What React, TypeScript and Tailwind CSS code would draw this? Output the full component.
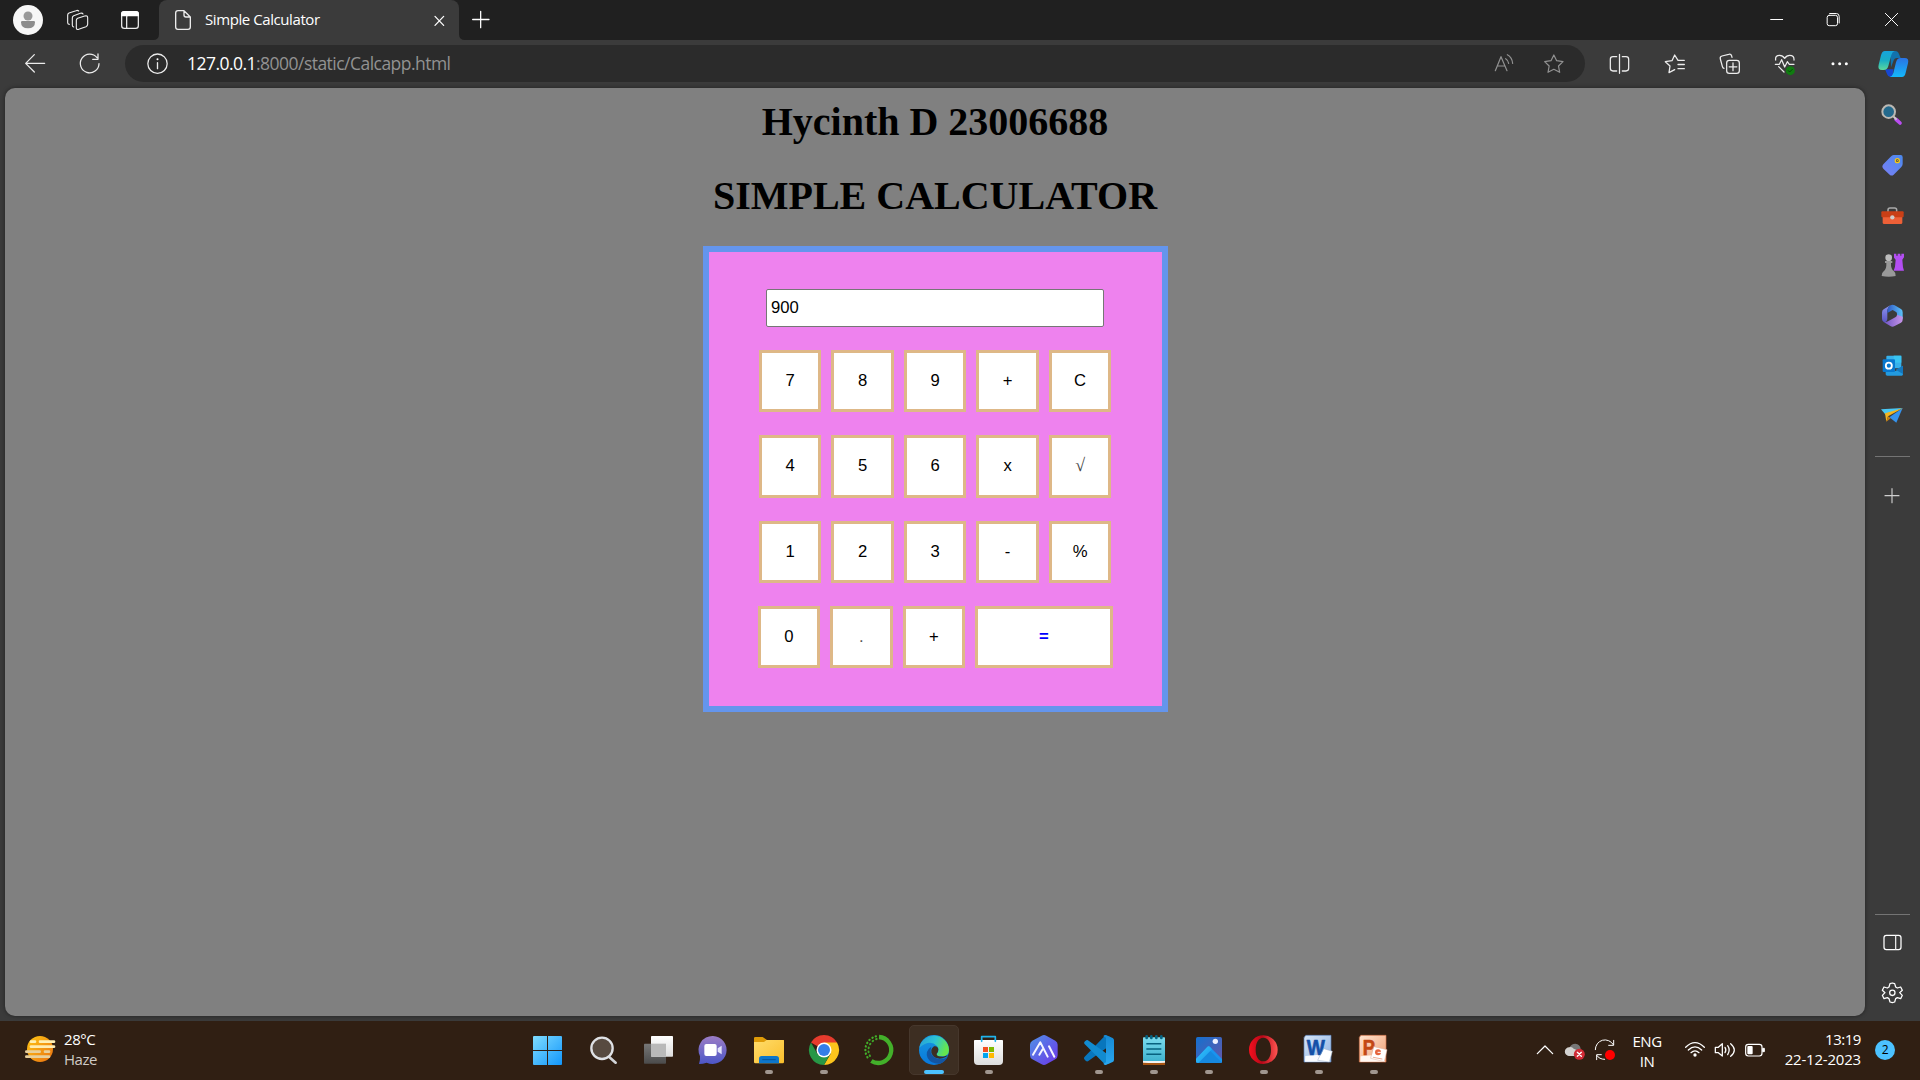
import React from "react";

type Box = [number, number, number, number];

/* Icons are drawn on a grid of three units to the pixel. */
function Art({ box, children, className = "" }: { box: Box; children: React.ReactNode; className?: string }) {
  return (
    <svg
      className={"block shrink-0 " + className}
      width={box[2] / 3}
      height={box[3] / 3}
      viewBox={box.join(" ")}
      fill="none"
      strokeLinecap="round"
      strokeLinejoin="round"
    >
      {children}
    </svg>
  );
}

const line = { stroke: "#ececec", strokeWidth: 3.8 };

function TabStrip() {
  return (
    <div className="flex h-10 w-full shrink-0 bg-[#202020]">
      <Art box={[0, 0, 168, 120]}>
        <circle cx="84" cy="60" r="45" fill="#f7f7f7" />
        <circle cx="84" cy="48" r="13.5" fill="#999" />
        <path d="M67 63 H101 Q105 63 105 67 Q105 85 84 85 Q63 85 63 67 Q63 63 67 63Z" fill="#8d8d8d" />
      </Art>
      <Art box={[168, 0, 150, 120]}>
        <g {...line} strokeWidth="3.4">
          <path d="M233 55 L254 48 Q263 46 263 53 V73 Q263 78 258 80 L236 88 Q229 90 229 83 V61 Q229 57 233 55Z" />
          <path d="M249 42 Q247 38 241 40 L221 47 Q217 49 217 54 V76 Q217 80 221 81" />
          <path d="M236 33 Q233 30 228 32 L207 39 Q203 41 203 45 V68 Q203 72 208 73" />
        </g>
      </Art>
      <Art box={[318, 0, 159, 120]}>
        <rect x="365" y="35" width="50" height="50" rx="8" {...line} />
        <path d="M363 47 V43 Q363 33 373 33 H407 Q417 33 417 43 V49 H363Z" fill="#fff" />
        <path d="M380 49 V84" {...line} />
      </Art>
      <div className="relative flex w-[300px] rounded-t-lg bg-[#3b3b3b]">
        <svg className="absolute bottom-0 -left-1.5" width="6" height="6" viewBox="0 0 6 6">
          <path d="M6 0 V6 H0 Q6 6 6 0Z" fill="#3b3b3b" />
        </svg>
        <svg className="absolute -right-1.5 bottom-0" width="6" height="6" viewBox="0 0 6 6">
          <path d="M0 0 V6 H6 Q0 6 0 0Z" fill="#3b3b3b" />
        </svg>
        <Art box={[477, 0, 138, 120]}>
          <path d="M534 32 H552 L571 51 V81 Q571 88 564 88 H534 Q527 88 527 81 V39 Q527 32 534 32Z M552 32 V45 Q552 51 558 51 H571" {...line} strokeWidth="4" />
        </Art>
        <span className="h-10 w-[216px] whitespace-nowrap font-['Open_Sans',sans-serif] text-[15px] leading-[39px] tracking-[-0.42px] text-white">
          Simple Calculator
        </span>
        <Art box={[1263, 0, 114, 120]}>
          <path d="M1305 49 L1331 76 M1331 49 L1305 76" {...line} stroke="#fff" />
        </Art>
      </div>
      <Art box={[1377, 0, 150, 120]}>
        <path d="M1442 34 V83 M1418 58.5 H1467" {...line} stroke="#fff" />
      </Art>
      <div className="flex-1" />
      <Art box={[870, 0, 160, 120]}>
        <path d="M932 58.5 H968" stroke="#fff" strokeWidth="3" />
      </Art>
      <Art box={[1030, 0, 175, 120]}>
        <rect x="1102.500" y="46" width="31" height="31" rx="6" stroke="#fff" strokeWidth="3" />
        <path d="M1110 40.500 H1130 Q1138.500 40.500 1138.500 49 V69" stroke="#fff" strokeWidth="3" />
      </Art>
      <Art box={[1205, 0, 175, 120]}>
        <path d="M1275 40 L1312 77 M1312 40 L1275 77" stroke="#fff" strokeWidth="3" />
      </Art>
    </div>
  );
}

function Toolbar() {
  return (
    <div className="flex h-12 w-full shrink-0 bg-[#3b3b3b]">
      <Art box={[0, 120, 190, 144]}>
        <path d="M77 190 H134 M103 164 L77 190 L103 216" {...line} />
      </Art>
      <Art box={[190, 120, 185, 144]}>
        <path d="M292 173 A28 28 0 1 0 298 191 M295 162 V178 H279" {...line} />
      </Art>
      <div className="mt-[5px] flex h-[37px] w-[1460px] items-center rounded-full bg-[#2b2b2b]">
        <Art box={[375, 135, 186, 111]}>
          <circle cx="472.500" cy="191" r="29" {...line} />
          <path d="M472.500 188 V206" {...line} strokeWidth="4" />
          <circle cx="472.500" cy="178" r="3" fill="#fff" />
        </Art>
        <span className="flex-1 whitespace-nowrap font-['Open_Sans',sans-serif] text-[17.5px] leading-[37px] tracking-[-0.53px] text-[#929292]">
          <span className="text-white">127.0.0.1</span>:8000/static/Calcapp.html
        </span>
        <Art box={[70, 135, 140, 111]}>
          <g stroke="#919191" strokeWidth="3.6">
            <path d="M107 212 L124 170 L142 212 M113 198 H136" />
            <path d="M138 176 Q146 181 147 190 M143 164 Q157 171 159 190" />
          </g>
        </Art>
        <Art box={[210, 135, 165, 111]}>
          <path d="M281.500 165 L290 182 L309 185 L295.500 198 L299 217 L281.500 208 L264 217 L267.500 198 L254 185 L273 182Z" stroke="#929292" strokeWidth="3.6" />
        </Art>
      </div>
      <Art box={[375, 120, 190, 144]}>
        <path d="M470 170 H459 Q451 170 451 178 V205 Q451 213 459 213 H470 M487 170 H498 Q506 170 506 178 V205 Q506 213 498 213 H487 M478.500 163 V220" {...line} />
      </Art>
      <Art box={[565, 120, 165, 144]}>
        <path d="M674 181 H655 L645 165 L637 182 L617 185 L631 198 L628 218 L645 209 M655 193.500 H674 M655 206 H674" {...line} />
      </Art>
      <Art box={[730, 120, 165, 144]}>
        <rect x="801" y="181" width="38" height="39" rx="8" {...line} />
        <path d="M820 189 V212 M808.500 200.500 H831.500 M793 205 Q789 204 788 199 L782 177 Q780 170 787 168 L807 163 Q814 161 816 168 L817 172" {...line} />
      </Art>
      <Art box={[895, 120, 165, 144]}>
        <path d="M948 180 Q946 166 960 166 Q969 166 975 175 Q981 166 990 166 Q1004 166 1003 180 M947 193 H959 L966 179 L975 201 L983 185 L989 193 H1003 M957 200 L973 216" {...line} />
        <circle cx="992" cy="212" r="13.500" fill="#107c10" />
        <path d="M986 212 L990 216 L998 208" stroke="#064706" strokeWidth="3" />
      </Art>
      <Art box={[1060, 120, 160, 144]}>
        <g fill="#fff">
          <circle cx="1120" cy="191.500" r="4.500" />
          <circle cx="1140" cy="191.500" r="4.500" />
          <circle cx="1160" cy="191.500" r="4.500" />
        </g>
      </Art>
      <Art box={[1220, 120, 160, 144]}>
        <defs>
          <linearGradient id="cpl" x1="0" y1="0" x2="0" y2="1">
            <stop offset="0" stopColor="#16a4dd" />
            <stop offset=".5" stopColor="#19adc4" />
            <stop offset="1" stopColor="#5bd89c" />
          </linearGradient>
          <linearGradient id="cpr" x1="0" y1="0" x2="0" y2="1">
            <stop offset="0" stopColor="#2a73e5" />
            <stop offset="1" stopColor="#14b8fa" />
          </linearGradient>
        </defs>
        <path d="M1290 153 H1305 Q1313 153 1316 162 L1321 174 H1310 Q1302 174 1299 184 L1292 202Z" fill="#1272ad" />
        <path d="M1274 208 H1300 L1296 231 H1290 Q1283 231 1280 222Z" fill="#1747d1" />
        <path d="M1274 153 H1303 Q1296 155 1293 165 L1284 198 Q1281 210 1270 210 H1265 Q1251 210 1255 194 L1262 166 Q1265 153 1274 153Z" fill="url(#cpl)" />
        <path d="M1325 231 H1288 Q1296 229 1299 219 L1307 187 Q1310 174 1321 174 H1333 Q1347 174 1343 190 L1336 218 Q1333 231 1325 231Z" fill="url(#cpr)" />
      </Art>
    </div>
  );
}

const rows: string[][] = [
  ["7", "8", "9", "+", "C"],
  ["4", "5", "6", "x", "√"],
  ["1", "2", "3", "-", "%"],
  ["0", ".", "+", "="],
];

function Page() {
  return (
    <div className="flex h-[927.5px] w-[1860px] flex-col items-center rounded-[10px] bg-[#808080] pt-[11px] shadow-[0_0_4px_rgba(0,0,0,0.45)]">
      <h1 className="font-['Liberation_Serif',serif] text-[40px] leading-[46px] font-bold text-black">Hycinth D 23006688</h1>
      <h1 className="mt-7 font-['Liberation_Serif',serif] text-[40px] leading-[46px] font-bold text-black">SIMPLE CALCULATOR</h1>
      <div className="mt-[27px] ml-px flex h-[466px] w-[465px] flex-col items-center border-[6px] border-[#6495ed] bg-[#ee82ee] pt-[37px] font-['Liberation_Sans',sans-serif] text-[16.67px] text-black">
        <div className="-ml-px flex h-[38px] w-[338px] shrink-0 items-center rounded-[2px] border border-[#767676] bg-white px-1 leading-5">
          <span className="-mt-px">900</span>
        </div>
        <div className="mt-[22.9px] mr-[0.8px] flex flex-col items-center gap-[22.87px]">
          {rows.map((row, r) => (
            <div key={r} className="flex gap-2.5">
              {row.map((k) => (
                <button
                  key={k}
                  className={
                    "flex h-[62.5px] items-center justify-center border-3 border-[#deb887] bg-white pb-[1.5px] " +
                    (k === "=" ? "w-[137.5px] font-bold text-[#0000ff]" : "w-[62.5px]") +
                    (k === "√" ? " font-['Liberation_Serif',serif] text-[18px] text-[#444444]" : "") +
                    (k === "." ? " text-[#555555]" : "")
                  }
                >
                  {k}
                </button>
              ))}
            </div>
          ))}
        </div>
      </div>
    </div>
  );
}

function Sidebar() {
  return (
    <div className="flex w-[55px] flex-col">
      <Art box={[15, -6, 165, 156]}>
        <path d="M108 88 L120 99" stroke="#b94df0" strokeWidth="11" />
        <path d="M101 80 L108 87" stroke="#c9c9c9" strokeWidth="6" />
        <circle cx="86" cy="65" r="19" fill="#23698c" stroke="#bbb8b3" strokeWidth="6" />
      </Art>
      <Art box={[15, 150, 165, 150]}>
        <defs>
          <linearGradient id="tag" x1="1" y1="0" x2="0" y2="1">
            <stop offset="0" stopColor="#4a89ed" />
            <stop offset="1" stopColor="#7a80f5" />
          </linearGradient>
        </defs>
        <path d="M101 195 H122 Q128 195 128 202 V222 Q128 227 124 231 L101 254 Q95 259 89 254 L70 236 Q64 230 70 223 L92 200 Q96 195 101 195Z" fill="url(#tag)" />
        <circle cx="112" cy="212" r="6" fill="#3d4149" stroke="#f5c718" strokeWidth="4" />
        <circle cx="112" cy="212" r="2" fill="#f5c718" />
      </Art>
      <Art box={[15, 300, 165, 150]}>
        <path d="M84 366 V360 Q84 354 90 354 H104 Q110 354 110 360 V366" stroke="#aaa" strokeWidth="4.500" />
        <path d="M68 380 H127 V398 Q127 402 122 402 H73 Q68 402 68 398Z" fill="#ed6037" />
        <rect x="64" y="364" width="67" height="18" rx="3" fill="#c93f16" />
        <circle cx="97" cy="382" r="6.500" fill="#cfccca" />
      </Art>
      <Art box={[15, 450, 165, 150]}>
        <path d="M102 491 H109 V497 H113 V491 H121 V497 H124 V491 H132 V502 L127 509 L129 532 L132 542 H101 L105 530 L107 509 L102 503Z" fill="#b34ef2" />
        <circle cx="86" cy="503" r="10" fill="#bcbcbc" />
        <path d="M75 513 H97 V519 H93 Q92 537 102 544 Q108 549 107 558 Q86 562 65 558 Q64 549 71 544 Q80 537 79 519 H75Z" fill="#999" />
      </Art>
      <Art box={[15, 600, 165, 150]}>
        <defs>
          <linearGradient id="ma" x1="0" y1="0" x2="0" y2="1">
            <stop offset="0" stopColor="#8f97f0" />
            <stop offset="1" stopColor="#5a54c4" />
          </linearGradient>
          <linearGradient id="mb" x1="0" y1="0" x2="1" y2="0">
            <stop offset="0" stopColor="#2f58c4" />
            <stop offset="1" stopColor="#5cc3fa" />
          </linearGradient>
          <linearGradient id="mc" x1="0" y1="0" x2="1" y2="0">
            <stop offset="0" stopColor="#6e55c4" />
            <stop offset="1" stopColor="#c795ea" />
          </linearGradient>
        </defs>
        <path d="M93 645 Q82 652 82 664 V686 Q82 695 72 697 Q66 693 66 687 V668 Q66 661 71 658 L91 646Z" fill="url(#ma)" />
        <path d="M90 647 Q97 642 104 646 L123 657 Q128 660 128 667 V687 L111 677 V671 Q111 667 107 665 L98 660 L82 669 V664 Q82 652 90 647Z" fill="url(#mb)" />
        <path d="M128 680 V689 Q128 695 123 698 L104 708 Q97 712 91 708 L72 697 Q79 697 84 694 L106 682 Q111 679 111 674Z" fill="url(#mc)" />
      </Art>
      <Art box={[15, 750, 165, 150]}>
        <rect x="79" y="797" width="45" height="38" rx="3" fill="#37b1eb" />
        <path d="M101 797 H124 V818 H101Z" fill="#38c4f2" />
        <path d="M79 818 H105 V842 H79Z" fill="#1363a4" />
        <path d="M77 831 L107 843 L129 827 V853 Q129 857 125 857 H82 Q77 857 77 853Z" fill="#239be0" />
        <path d="M129 827 V852 L107 839Z" fill="#1477bd" />
        <rect x="68" y="808" width="37" height="38" rx="3" fill="#0878cf" />
        <circle cx="86.500" cy="827" r="9" stroke="#fff" strokeWidth="5.500" />
      </Art>
      <Art box={[15, 900, 165, 150]}>
        <path d="M63 958 L128 954 L78 976Z" fill="#49c8f4" />
        <path d="M128 954 L109 998 L88 982Z" fill="#3593ee" />
        <path d="M128 955 L84 979 L79 995 L75 970Z" fill="#f4b51f" />
        <path d="M84 979 L92 985 L79 995Z" fill="#c87e11" />
      </Art>
      <div className="mx-2.5 mt-4 h-px w-[35px] bg-[#747474]" />
      <Art box={[15, 1101, 165, 230]}>
        <path d="M96 1196 V1238 M75 1217 H117" {...line} stroke="#cfcfcf" strokeWidth="3.400" />
      </Art>
      <div className="flex-1" />
      <div className="mx-2.5 h-px w-[35px] bg-[#747474]" />
      <Art box={[75, 45, 165, 155]}>
        <rect x="132" y="106" width="51" height="43" rx="7" {...line} stroke="#fff" />
        <path d="M167 107 V148" {...line} />
      </Art>
      <Art box={[75, 200, 165, 163]}>
        <path d="M150 250 L157 248 L164 250 L167 260 L172 263 L182 260 L187 270 L179 277 L187 285 L182 295 L172 292 L167 295 L164 305 L157 307 L150 305 L147 295 L142 292 L132 295 L127 285 L135 277 L127 270 L132 260 L142 263 L147 260Z" {...line} stroke="#fff" />
        <circle cx="157" cy="277.500" r="8" {...line} stroke="#fff" />
      </Art>
    </div>
  );
}

function Cell({ n, dot = true, active = false, children }: { n: number; dot?: boolean; active?: boolean; children: React.ReactNode }) {
  return (
    <div className="relative h-[59px] w-[55px] shrink-0">
      {active && <div className="absolute top-1 left-1 h-[50px] w-[50px] rounded-[5px] border border-[#46372c] bg-[#3d2e22]" />}
      <Art box={[30 + 165 * n, 33, 165, 177]} className="relative">
        {children}
      </Art>
      {active ? (
        <div className="absolute top-[49px] left-[19px] h-1 w-5 rounded-full bg-[#4cc2ff]" />
      ) : (
        dot && <div className="absolute top-[49px] left-[25px] h-1 w-2 rounded-full bg-[#a0968f]" />
      )}
    </div>
  );
}

function Grad({ id, a, b, diag = false }: { id: string; a: string; b: string; diag?: boolean }) {
  return (
    <linearGradient id={id} x1="0" y1="0" x2={diag ? "1" : "0"} y2="1">
      <stop offset="0" stopColor={a} />
      <stop offset="1" stopColor={b} />
    </linearGradient>
  );
}

function Apps() {
  return (
    <div className="flex w-[880px]">
      <Cell n={0} dot={false}>
        <defs>
          <linearGradient id="win" gradientUnits="userSpaceOnUse" x1="69" y1="78" x2="156" y2="165">
            <stop offset="0" stopColor="#7fdcff" />
            <stop offset="1" stopColor="#1296fb" />
          </linearGradient>
        </defs>
        <path d="M71 78 H111 V120 H69 V80Z M114 78 H154 L156 80 V120 H114Z M69 123 H111 V165 H71 L69 163Z M114 123 H156 V163 L154 165 H114Z" fill="url(#win)" />
      </Cell>
      <Cell n={1} dot={false}>
        <path d="M300 143 L317 158" stroke="#d2d4d8" strokeWidth="8" />
        <circle cx="276" cy="115" r="32" fill="#574a40" stroke="#dfe1e5" strokeWidth="7" />
      </Cell>
      <Cell n={2} dot={false}>
        <defs>
          <Grad id="tv1" a="#ffffff" b="#dddddd" />
          <Grad id="tv2" a="#777777" b="#4b4b4b" />
        </defs>
        <rect x="402" y="101" width="66" height="60" rx="2" fill="url(#tv2)" />
        <rect x="423" y="78" width="66" height="62" rx="2" fill="url(#tv1)" />
        <rect x="423" y="101" width="45" height="38" fill="#b9b9b9" />
      </Cell>
      <Cell n={3} dot={false}>
        <defs>
          <Grad id="chat" a="#9c7dc5" b="#4c56c7" />
        </defs>
        <path d="M609 78 A42 42 0 1 1 590 158 Q579 162 567 162 Q571 152 570 139 A42 42 0 0 1 609 78Z" fill="url(#chat)" />
        <rect x="583" y="102" width="37" height="36" rx="6" fill="#fff" />
        <path d="M623 115 L635 107 V133 L623 125Z" fill="#e3e4fa" />
      </Cell>
      <Cell n={4}>
        <defs>
          <Grad id="fold" a="#ffdc6b" b="#fabe2b" diag />
        </defs>
        <path d="M732 84 Q732 81 736 81 H758 L771 90 H822 V110 H732Z" fill="#df9b08" />
        <path d="M732 96 H762 L770 90 H819 Q822 90 822 94 V156 Q822 160 818 160 H736 Q732 160 732 156Z" fill="url(#fold)" />
        <path d="M747 160 V146 Q747 138 755 138 H799 Q807 138 807 146 V160Z" fill="#0d76cb" />
        <path d="M758 149 H796" stroke="#07539b" strokeWidth="3" />
      </Cell>
      <Cell n={5}>
        <path d="M942 120 L903 97.500 A45 45 0 0 1 981 97.500Z" fill="#e63b2d" />
        <path d="M942 97.500 H981 A45 45 0 0 1 942 165 L962 131Z" fill="#fcc41c" />
        <path d="M903 97.500 L922 131 L942 142.500 L961 131 L942 165 A45 45 0 0 1 903 97.500Z" fill="#279746" />
        <circle cx="942" cy="120" r="22.500" fill="#fff" />
        <circle cx="942" cy="120" r="18" fill="#347ee8" />
      </Cell>
      <Cell n={6} dot={false}>
        <path d="M1107 81 A39 39 0 1 1 1084 153" stroke="#43b02a" strokeWidth="13" strokeLinecap="butt" />
        <path d="M1098 79 A42 42 0 0 0 1077 148" stroke="#43b02a" strokeWidth="6.500" strokeDasharray="1 10" />
        <path d="M1100 87 A35 35 0 0 0 1082 141" stroke="#3fa528" strokeWidth="6" strokeDasharray="2 10" />
      </Cell>
      <Cell n={7} active>
        <defs>
          <linearGradient id="e1" x1="0" y1="0" x2="1" y2=".3">
            <stop offset="0" stopColor="#279bd7" />
            <stop offset=".55" stopColor="#2cc4d5" />
            <stop offset="1" stopColor="#65e64f" />
          </linearGradient>
          <Grad id="e2" a="#1797df" b="#0878dc" />
        </defs>
        <circle cx="1272" cy="120" r="45" fill="url(#e2)" />
        <path d="M1228 113 A45 45 0 0 1 1317 120 Q1317 139 1295 139 Q1276 139 1280 132 Q1291 120 1281 108 Q1259 87 1228 113Z" fill="url(#e1)" />
        <path d="M1264 110 Q1244 123 1253 144 Q1264 163 1291 161 Q1306 155 1313 141 Q1292 154 1273 142 Q1257 130 1264 110Z" fill="#1355a2" />
        <path d="M1272 109 Q1283 107 1285 118 Q1285 126 1280 131 Q1278 140 1299 140 L1314 136 Q1309 142 1298 145 Q1278 149 1268 136 Q1257 120 1272 109Z" fill="#3d2e22" />
      </Cell>
      <Cell n={0}>
        <defs>
          <Grad id="bag" a="#ffffff" b="#dddddd" />
        </defs>
        <path d="M95 94 V80 H136 V94" stroke="#20b4ec" strokeWidth="5" />
        <path d="M74 90 H157 Q159 90 159 92 V153 Q159 165 147 165 H84 Q72 165 72 153 V92 Q72 90 74 90Z" fill="url(#bag)" />
        <path d="M95 90 V94 M136 90 V94" stroke="#20b4ec" strokeWidth="5" />
        <path d="M99 111 H114 V126 H99Z" fill="#f25022" />
        <path d="M117 111 H132 V126 H117Z" fill="#7fba00" />
        <path d="M99 129 H114 V144 H99Z" fill="#00a4ef" />
        <path d="M117 129 H132 V144 H117Z" fill="#ffb900" />
      </Cell>
      <Cell n={1} dot={false}>
        <defs>
          <Grad id="hex" a="#4f92e6" b="#6d35e8" diag />
        </defs>
        <path d="M275 77 Q282 73 289 77 L316 92 Q323 96 323 104 V136 Q323 144 316 148 L289 163 Q282 167 275 163 L247 148 Q240 144 240 136 V104 Q240 96 247 92Z" fill="url(#hex)" />
        <path d="M249 134 L271 97 L293 140 M268 134 L277 119 M297 109 L313 140" stroke="#f5f5ff" strokeWidth="6" />
      </Cell>
      <Cell n={2}>
        <defs>
          <Grad id="vs" a="#1689d4" b="#2aa7ef" />
        </defs>
        <path d="M467 75 L482 82 V105 L415 153 Q411 156 407 152 L403 148 Q400 144 404 140Z" fill="#0876bd" />
        <path d="M403 101 Q401 97 405 94 L409 91 Q412 89 416 92 L480 138 V159 L466 164Z" fill="#128bd0" />
        <path d="M467 75 L488 84 Q492 86 492 91 V149 Q492 154 488 156 L467 165 Q464 166 460 161 L468 157 V83 L460 79Q463 74 467 75Z" fill="url(#vs)" />
      </Cell>
      <Cell n={3}>
        <defs>
          <Grad id="note" a="#7bdbed" b="#3fb3cf" />
        </defs>
        <path d="M579 153 H645 V165 H579Z" fill="#a85512" />
        <path d="M579 151 H645 V158 Q612 160 579 158Z" fill="#f2f2f2" />
        <rect x="579" y="82" width="66" height="71" rx="2" fill="url(#note)" />
        <path d="M589 101 H634 M589 117 H634 M589 133 H634" stroke="#07617e" strokeWidth="4.500" strokeLinecap="butt" />
        <path d="M590 79 V84 M604 79 V84 M619 79 V84 M634 79 V84" stroke="#066482" strokeWidth="8" />
      </Cell>
      <Cell n={4}>
        <defs>
          <Grad id="ph1" a="#1470cf" b="#6657a8" diag />
          <Grad id="ph2" a="#35c7fb" b="#1795ec" diag />
        </defs>
        <rect x="738" y="81" width="78" height="78" rx="5" fill="url(#ph1)" />
        <path d="M738 147 L771 112 Q776 106 781 112 L816 147 V155 Q816 159 811 159 H743 Q738 159 738 154Z" fill="#1994ef" />
        <path d="M740 157 L771 124 Q776 118 782 124 L799 142 L815 157 Q814 159 811 159 H743Z" fill="#1688df" />
        <path d="M738 147 L771 112 Q776 106 781 112 L786 118 L745 159 Q738 159 738 153Z" fill="url(#ph2)" />
        <circle cx="796" cy="94" r="8" fill="#edf1ff" />
      </Cell>
      <Cell n={5}>
        <defs>
          <linearGradient id="op" x1="0" y1="0" x2="1" y2="0">
            <stop offset="0" stopColor="#f4101e" />
            <stop offset=".45" stopColor="#b80718" />
            <stop offset="1" stopColor="#ff5652" />
          </linearGradient>
        </defs>
        <path fillRule="evenodd" d="M940 76 A43 43 0 1 1 940 162 A43 43 0 1 1 940 76Z M940 83 C925 83 917 99 917 119 C917 139 925 154 940 154 C955 154 963 139 963 119 C963 99 955 83 940 83Z" fill="url(#op)" />
      </Cell>
      <Cell n={6}>
        <defs>
          <Grad id="wd" a="#d6e6fa" b="#8eb1e0" diag />
        </defs>
        <path d="M1068 76 H1143 V156 H1062 V83Z" fill="url(#wd)" stroke="#5c83bd" strokeWidth="2" />
        <path d="M1066 138 L1125 133 L1141 155 H1065Z" fill="#f9fbff" />
        <text x="1070" y="136" fontFamily="Liberation Sans, sans-serif" fontSize="64" fontWeight="700" textLength="54" lengthAdjust="spacingAndGlyphs" fill="#1350a8" stroke="#1350a8" strokeWidth="2">W</text>
        <path d="M1122 116 L1147 124 L1138 156 L1104 151Z" fill="#fff" stroke="#9fb2cc" strokeWidth="1.500" />
      </Cell>
      <Cell n={7}>
        <defs>
          <Grad id="pp" a="#ffe4cf" b="#ef9d73" diag />
        </defs>
        <path d="M1233 76 H1308 V156 H1228 V83Z" fill="url(#pp)" stroke="#d4734a" strokeWidth="2" />
        <path d="M1232 139 L1280 134 L1306 155 H1231Z" fill="#fff7f2" />
        <text x="1238" y="136" fontFamily="Liberation Sans, sans-serif" fontSize="64" fontWeight="700" textLength="36" lengthAdjust="spacingAndGlyphs" fill="#c34713" stroke="#c34713" strokeWidth="2">P</text>
        <path d="M1272 110 L1311 119 L1303 155 L1263 145Z" fill="#fff" stroke="#deb3a0" strokeWidth="1.500" />
        <circle cx="1284" cy="127" r="9" fill="#e5643d" />
        <path d="M1284 127 H1294" stroke="#fff" strokeWidth="3" />
        <path d="M1270 142 L1296 147" stroke="#e8977b" strokeWidth="2.500" />
      </Cell>
    </div>
  );
}

function Taskbar() {
  return (
    <div className="flex h-[59px] w-full shrink-0 bg-[#301f13] font-['Open_Sans',sans-serif] text-[15px] leading-5 tracking-[-0.45px] text-white">
      <div className="flex w-[520px]">
        <Art box={[0, 63, 192, 177]}>
          <defs>
            <Grad id="sun" a="#ffc715" b="#e96f10" diag />
          </defs>
          <circle cx="120" cy="147" r="39" fill="url(#sun)" />
          <path d="M93 125 H105 M120 125 H162" stroke="#fff0b4" strokeWidth="8" />
          <path d="M93 140 H162" stroke="#ffedb1" strokeWidth="8" />
          <path d="M79 155 H119 M135 155 H147 M79 170 H147" stroke="#e8cf9b" strokeWidth="8" />
        </Art>
        <div className="flex flex-col pt-2">
          <span>28°C</span>
          <span className="text-[#cfcac6]">Haze</span>
        </div>
      </div>
      <Apps />
      <div className="w-[120px]" />
      <Art box={[30, 33, 120, 177]}>
        <path d="M82 131 L105 108 L128 131" {...line} stroke="#fff" />
      </Art>
      <Art box={[150, 33, 90, 177]}>
        <path d="M176 138 A12 13 0 0 1 178 113 Q184 101 196 101 Q210 102 212 116 L205 138Z" fill="#777" />
        <path d="M177 138 A13 13 0 0 1 178 112 Q185 108 191 116 L207 123 L200 138Z" fill="#d4d2d0" />
        <circle cx="208" cy="133" r="16.500" fill="#d12b36" />
        <path d="M202 127 L214 139 M214 127 L202 139" stroke="#fff" strokeWidth="4" />
      </Art>
      <Art box={[240, 33, 87, 177]}>
        <path d="M256 119 A29 29 0 0 1 310 104 M311 91 V106 H296 M260 149 V134 H274 M260 136 Q268 148 284 148" {...line} stroke="#fff" strokeWidth="3" />
        <circle cx="300" cy="135" r="15" fill="#ff0000" />
      </Art>
      <div className="flex w-[57px] flex-col items-center pt-[9.5px] pr-px">
        <span>ENG</span>
        <span>IN</span>
      </div>
      <Art box={[498, 33, 102, 177]}>
        <path d="M527 112 Q555 84 583 112 M535 120 Q555 101 575 120 M543 128 Q555 117 567 128" {...line} stroke="#fff" strokeWidth="4" />
        <circle cx="555" cy="135" r="5" fill="#fff" />
      </Art>
      <Art box={[600, 33, 90, 177]}>
        <path d="M616 112 H625 L637 101 V138 L625 128 H616Z M645 112 Q650 120 645 128 M653 107 Q662 120 653 134 M662 101 Q684 120 662 139" {...line} stroke="#fff" />
      </Art>
      <Art box={[690, 33, 90, 177]}>
        <rect x="707" y="103" width="49" height="35" rx="8" stroke="#fff" strokeWidth="3.600" />
        <path d="M759 115 H763 V125 H759Z" fill="#fff" stroke="#fff" strokeWidth="3" />
        <rect x="712" y="108" width="16" height="25" rx="3" fill="#fff" />
      </Art>
      <div className="flex w-[91px] flex-col items-end pt-2">
        <span>13:19</span>
        <span className="tracking-[-0.2px]">22-12-2023</span>
      </div>
      <div className="mt-[19px] ml-[14px] flex h-5 w-5 items-center justify-center rounded-full bg-[#4cc2ff] text-[12px] text-black">2</div>
    </div>
  );
}

export default function App() {
  return (
    <div className="flex h-[1080px] w-[1920px] flex-col overflow-hidden bg-[#3b3b3b]">
      <TabStrip />
      <Toolbar />
      <div className="flex h-[933px] shrink-0 pl-[5px]">
        <Page />
        <Sidebar />
      </div>
      <Taskbar />
    </div>
  );
}
